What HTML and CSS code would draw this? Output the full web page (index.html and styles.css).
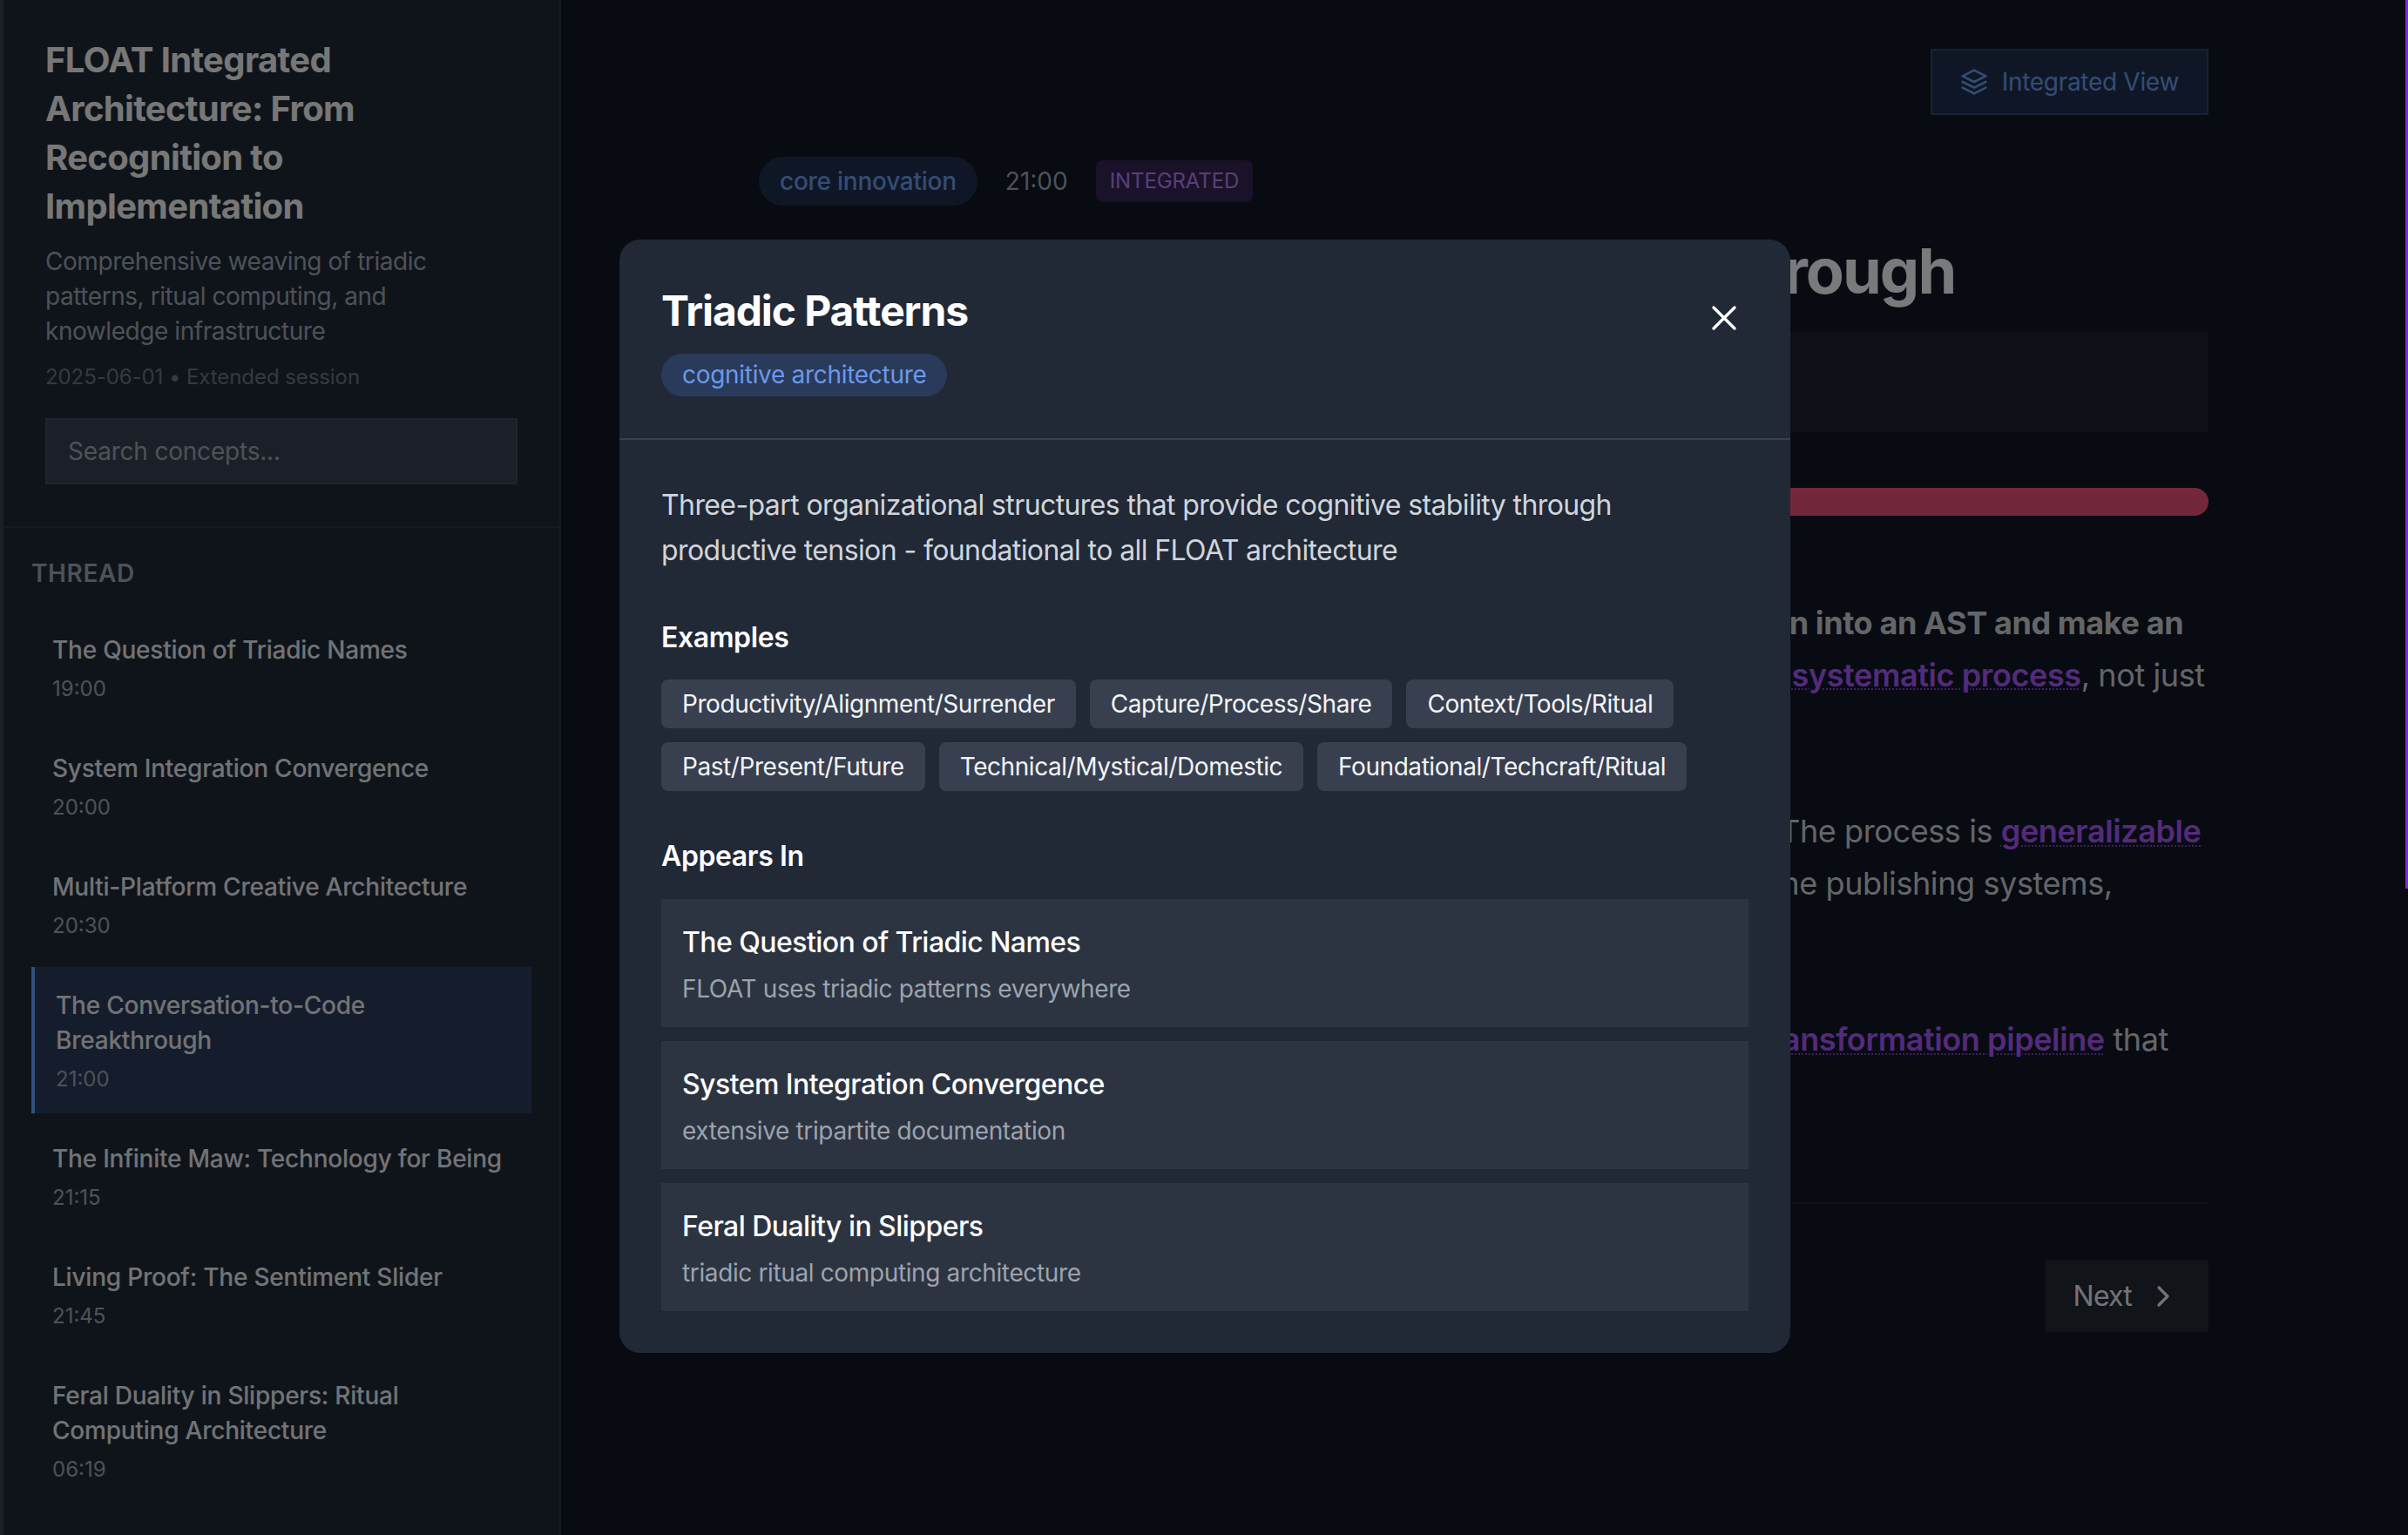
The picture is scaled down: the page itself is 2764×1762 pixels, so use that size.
FILE: index.html
```html
<!DOCTYPE html>
<html>
<head>
    <meta charset="utf-8">
    <title>FLOAT Integrated Architecture</title>
    <link rel="stylesheet" href="styles.css">
</head>
<body>
<div class="app">
    <aside class="sidebar">
        <div class="sidebar-head">
            <h1 class="doc-title">FLOAT Integrated Architecture: From Recognition to Implementation</h1>
            <p class="doc-sub">Comprehensive weaving of triadic patterns, ritual computing, and knowledge infrastructure</p>
            <p class="doc-meta">2025-06-01 • Extended session</p>
            <input class="search" type="text" placeholder="Search concepts...">
        </div>
        <nav class="thread">
            <h2 class="thread-label">THREAD</h2>
            <a class="thread-item"><span class="item-title">The Question of Triadic Names</span><span class="item-time">19:00</span></a>
            <a class="thread-item"><span class="item-title">System Integration Convergence</span><span class="item-time">20:00</span></a>
            <a class="thread-item"><span class="item-title">Multi-Platform Creative Architecture</span><span class="item-time">20:30</span></a>
            <a class="thread-item active"><span class="item-title">The Conversation-to-Code Breakthrough</span><span class="item-time">21:00</span></a>
            <a class="thread-item"><span class="item-title">The Infinite Maw: Technology for Being</span><span class="item-time">21:15</span></a>
            <a class="thread-item"><span class="item-title">Living Proof: The Sentiment Slider</span><span class="item-time">21:45</span></a>
            <a class="thread-item"><span class="item-title">Feral Duality in Slippers: Ritual Computing Architecture</span><span class="item-time">06:19</span></a>
        </nav>
    </aside>

    <main class="main">
        <div class="toolbar">
            <button class="view-btn">
                <svg class="view-icon" viewBox="0 0 24 24" fill="none" stroke="currentColor" stroke-width="2" stroke-linecap="round" stroke-linejoin="round"><path d="M12 2 2 7l10 5 10-5-10-5z"/><path d="m2 12 10 5 10-5"/><path d="m2 17 10 5 10-5"/></svg>
                Integrated View
            </button>
        </div>
        <article class="section">
            <div class="section-meta">
                <span class="pill">core innovation</span>
                <span class="section-time">21:00</span>
                <span class="badge">INTEGRATED</span>
            </div>
            <h2 class="section-title">The Conversation-to-Code Breakthrough</h2>
            <div class="summary"></div>
            <div class="sentiment"></div>
            <p class="para"><strong>So, here is the real breakthrough: we could now feed any conversation into an AST and make an</strong><br>actual website out of it, and what we have now seen along the way is a <span class="concept">systematic process</span>, not just<br>a one-off trick.</p>
            <p class="para">This same approach works for any longer thread you could ever have. The process is <span class="concept">generalizable</span><br>and it can feed blogs, zines, talks, quotes, archives, small sites and home publishing systems,<br>without starting over.</p>
            <p class="para">What first started as a chat around names has now become a proper <span class="concept">transformation pipeline</span> that<br>carries talk all the way to code.</p>
            <div class="pager">
                <button class="next-btn">
                    Next
                    <svg class="next-icon" viewBox="0 0 24 24" fill="none" stroke="currentColor" stroke-width="2" stroke-linecap="round" stroke-linejoin="round"><path d="m9 18 6-6-6-6"/></svg>
                </button>
            </div>
        </article>
    </main>
</div>

<div class="progress"></div>

<div class="overlay">
    <div class="modal">
        <header class="modal-head">
            <div>
                <h2 class="modal-title">Triadic Patterns</h2>
                <span class="modal-tag">cognitive architecture</span>
            </div>
            <button class="close-btn">
                <svg viewBox="0 0 24 24" fill="none" stroke="currentColor" stroke-width="2" stroke-linecap="round" stroke-linejoin="round"><path d="M18 6 6 18"/><path d="m6 6 12 12"/></svg>
            </button>
        </header>
        <div class="modal-body">
            <p class="modal-desc">Three-part organizational structures that provide cognitive stability through productive tension - foundational to all FLOAT architecture</p>
            <h3 class="modal-h">Examples</h3>
            <div class="chips">
                <span class="chip">Productivity/Alignment/Surrender</span>
                <span class="chip">Capture/Process/Share</span>
                <span class="chip">Context/Tools/Ritual</span>
                <span class="chip">Past/Present/Future</span>
                <span class="chip">Technical/Mystical/Domestic</span>
                <span class="chip">Foundational/Techcraft/Ritual</span>
            </div>
            <h3 class="modal-h">Appears In</h3>
            <div class="refs">
                <div class="ref"><div class="ref-title">The Question of Triadic Names</div><div class="ref-sub">FLOAT uses triadic patterns everywhere</div></div>
                <div class="ref"><div class="ref-title">System Integration Convergence</div><div class="ref-sub">extensive tripartite documentation</div></div>
                <div class="ref"><div class="ref-title">Feral Duality in Slippers</div><div class="ref-sub">triadic ritual computing architecture</div></div>
            </div>
        </div>
    </div>
</div>
</body>
</html>
```
FILE: styles.css
```css
* {
    box-sizing: border-box;
}

html, body {
    height: 100%;
    margin: 0;
    overflow: hidden;
}

body {
    background: #111724;
    color: #e5e7eb;
    font-family: Inter, "Noto Sans", sans-serif;
}

button {
    font-family: inherit;
    cursor: pointer;
}

/* page under the modal */
.app {
    display: flex;
    height: 100%;
    border-left: 4px solid #3a3f48;
}

.sidebar {
    flex: 0 0 640px;
    height: 100%;
    overflow: hidden;
    background: #1f2937;
    border-right: 2px solid #2b3442;
}

.sidebar-head {
    padding: 41px 48px 48px;
    border-bottom: 2px solid #2b3442;
}

.doc-title {
    margin: 0 0 15px;
    font-size: 40px;
    line-height: 56px;
    font-weight: 700;
    letter-spacing: -0.65px;
    color: #eeeeee;
}

.doc-sub {
    margin: 0 0 16px;
    padding-right: 40px;
    font-size: 28px;
    line-height: 40px;
    letter-spacing: -0.44px;
    color: #9ca3af;
}

.doc-meta {
    margin: 0 0 30px;
    font-size: 24px;
    line-height: 33.6px;
    letter-spacing: -0.08px;
    color: #6b7280;
}

.search {
    display: block;
    width: 100%;
    height: 76px;
    padding: 0 24px;
    background: #374151;
    border: 2px solid #414b5a;
    color: #e5e7eb;
    font-family: inherit;
    font-size: 28px;
    letter-spacing: -0.2px;
}

.search::placeholder {
    color: #9ca3af;
}

.thread {
    padding: 32px 32px 0;
}

.thread-label {
    margin: 0 0 24px;
    font-size: 28px;
    line-height: 40px;
    font-weight: 600;
    letter-spacing: 0.6px;
    color: #9ca3af;
}

.thread-item {
    display: block;
    margin-bottom: 8px;
    padding: 24px 24px 23px;
}

.thread-item.active {
    background: #2a3a5a;
    border-left: 4px solid #60a5fa;
}

.item-title {
    display: block;
    font-size: 28px;
    line-height: 40px;
    font-weight: 500;
    letter-spacing: -0.22px;
    color: #e5e7eb;
}

.item-time {
    display: block;
    margin-top: 9px;
    font-size: 24px;
    line-height: 32px;
    color: #9ca3af;
}

.main {
    flex: 1;
    min-width: 0;
    height: 100%;
    padding-right: 2px;
    overflow: hidden;
}

.toolbar {
    width: 1664px;
    margin: 56px auto 0;
    display: flex;
    justify-content: flex-end;
}

.view-btn {
    display: flex;
    align-items: center;
    gap: 16px;
    height: 76px;
    padding: 0 32px;
    background: #1e2f4d;
    border: 2px solid #2f4569;
    color: #6a99ea;
    font-size: 28px;
    letter-spacing: -0.3px;
}

.view-icon {
    width: 32px;
    height: 32px;
}

.section {
    width: 1664px;
    margin: 48px auto 0;
}

.section-meta {
    display: flex;
    align-items: center;
    gap: 32px;
    height: 56px;
}

.pill {
    padding: 0 24px;
    line-height: 56px;
    border-radius: 28px;
    background: #1e2f4d;
    color: #6a99ea;
    font-size: 28px;
    font-weight: 500;
    letter-spacing: -0.25px;
}

.section-time {
    font-size: 28px;
    color: #9ca3af;
}

.badge {
    padding: 0 16px;
    line-height: 48px;
    border-radius: 8px;
    background: #342450;
    color: #b77df5;
    font-size: 24px;
    letter-spacing: -0.1px;
}

.section-title {
    margin: 32px 0 0;
    font-size: 72px;
    line-height: 86px;
    font-weight: 700;
    letter-spacing: -1.95px;
    color: #f3f4f6;
}

.summary {
    height: 115px;
    margin-top: 27px;
    background: #1a222e;
}

.sentiment {
    height: 32px;
    margin: 64px 0 94px;
    border-radius: 16px;
    background: #e64e74;
}

.para {
    margin: 0 0 60.5px;
    font-size: 36px;
    line-height: 59.5px;
    letter-spacing: -0.4px;
    color: #c8cbd1;
}

.para strong {
    font-weight: 700;
}

.concept {
    color: #a855f7;
    font-weight: 600;
    text-decoration: underline dotted rgba(168, 85, 247, 0.7) 2px;
    text-underline-offset: 3px;
}

.pager {
    display: flex;
    justify-content: flex-end;
    margin-top: 97px;
    padding-top: 64px;
    border-top: 2px solid #1f2630;
}

.next-btn {
    display: flex;
    align-items: center;
    gap: 16px;
    height: 83px;
    padding: 0 32px;
    background: #222831;
    border: 0;
    color: #e5e7eb;
    font-size: 32px;
    letter-spacing: -0.8px;
}

.next-icon {
    width: 40px;
    height: 40px;
}

.progress {
    position: fixed;
    top: 0;
    right: 0;
    width: 3px;
    height: 1020px;
    z-index: 20;
    background: #7c2ce0;
}

/* modal */
.overlay {
    position: fixed;
    top: 0;
    right: 0;
    bottom: 0;
    left: 0;
    z-index: 10;
    display: flex;
    align-items: flex-start;
    justify-content: center;
    padding: 275px 0 0 2px;
    background: rgba(0, 0, 0, 0.5);
}

.modal {
    width: 1344px;
    border-radius: 24px;
    background: #212936;
}

.modal-head {
    display: flex;
    justify-content: space-between;
    align-items: flex-start;
    padding: 48px;
    border-bottom: 2px solid #384050;
}

.modal-title {
    margin: 0 0 16px;
    font-size: 48px;
    line-height: 67px;
    font-weight: 700;
    letter-spacing: -1.1px;
    color: #ffffff;
}

.modal-tag {
    display: inline-block;
    padding: 0 24px;
    line-height: 49px;
    border-radius: 25px;
    background: #2a3a5a;
    color: #6a99ea;
    font-size: 28px;
    letter-spacing: -0.3px;
}

.close-btn {
    width: 56px;
    height: 56px;
    margin-top: 14px;
    padding: 4px;
    background: none;
    border: 0;
    color: #ffffff;
}

.close-btn svg {
    display: block;
    width: 48px;
    height: 48px;
    stroke-width: 1.7;
}

.modal-body {
    padding: 49px 48px 48px;
}

.modal-desc {
    margin: 0 0 48px;
    font-size: 32px;
    line-height: 52px;
    letter-spacing: -0.6px;
    color: #d1d5db;
}

.modal-h {
    margin: 0 0 22px;
    font-size: 32px;
    line-height: 52px;
    font-weight: 600;
    letter-spacing: -0.4px;
    color: #ffffff;
}

.chips {
    display: flex;
    flex-wrap: wrap;
    gap: 16px;
    margin-bottom: 49px;
}

.chip {
    padding: 0 24px;
    line-height: 56px;
    border-radius: 8px;
    background: #384050;
    color: #f3f4f6;
    font-size: 28px;
    letter-spacing: -0.44px;
}

.chips + .modal-h {
    margin-bottom: 23px;
}

.refs {
    display: flex;
    flex-direction: column;
    gap: 16px;
}

.ref {
    padding: 24px;
    background: #2d3441;
}

.ref-title {
    font-size: 32px;
    line-height: 52px;
    font-weight: 500;
    letter-spacing: -0.55px;
    color: #ffffff;
}

.ref-sub {
    margin-top: 8px;
    font-size: 28px;
    line-height: 39px;
    letter-spacing: -0.37px;
    color: #9ca3af;
}
```
